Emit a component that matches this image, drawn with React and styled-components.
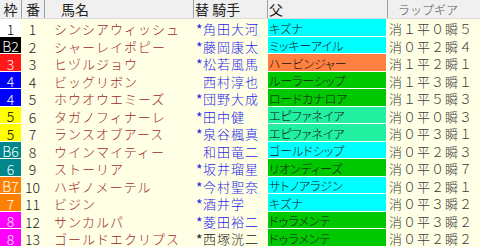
import React from 'react';
import styled, { createGlobalStyle } from 'styled-components';

const GlobalStyle = createGlobalStyle`
  html, body {
    margin: 0;
    padding: 0;
    background: #ffffe6;
  }
  body {
    font-family: "Noto Sans CJK JP", "Noto Sans", sans-serif;
    font-weight: 300;
  }
`;

const COLUMNS = '21px 23px 149px 74px 120px 93px';

const FRAME_COLORS = {
  1: { bg: '#ffffff', fg: '#000000' },
  2: { bg: '#000000', fg: '#ffffff' },
  3: { bg: '#ff1a1a', fg: '#ffffff' },
  4: { bg: '#0000ff', fg: '#ffffff' },
  5: { bg: '#ffff00', fg: '#000000' },
  6: { bg: '#00868b', fg: '#ffffff' },
  7: { bg: '#ff8000', fg: '#ffffff' },
  8: { bg: '#ff00ff', fg: '#ffffff' },
};

const SIRE_COLORS = {
  cyan: '#00ffff',
  orange: '#ff8040',
  green: '#00c800',
  mint: '#20f0a0',
};

const horses = [
  { frame: 1, label: '1', no: 1, name: 'シンシアウィッシュ', change: true, jockey: '角田大河', sire: 'キズナ', sireColor: 'cyan', gear: '消１平０瞬５' },
  { frame: 2, label: 'B2', no: 2, name: 'シャーレイポピー', change: true, jockey: '藤岡康太', sire: 'ミッキーアイル', sireColor: 'cyan', gear: '消０平２瞬４' },
  { frame: 3, label: '3', no: 3, name: 'ヒヅルジョウ', change: true, jockey: '松若風馬', sire: 'ハービンジャー', sireColor: 'orange', gear: '消１平２瞬１' },
  { frame: 4, label: '4', no: 4, name: 'ビッグリボン', change: false, jockey: '西村淳也', sire: 'ルーラーシップ', sireColor: 'green', gear: '消１平３瞬１' },
  { frame: 4, label: '4', no: 5, name: 'ホウオウエミーズ', change: true, jockey: '団野大成', sire: 'ロードカナロア', sireColor: 'green', gear: '消１平５瞬３' },
  { frame: 5, label: '5', no: 6, name: 'タガノフィナーレ', change: true, jockey: '田中健', sire: 'エピファネイア', sireColor: 'mint', gear: '消０平０瞬３' },
  { frame: 5, label: '5', no: 7, name: 'ランスオブアース', change: true, jockey: '泉谷楓真', sire: 'エピファネイア', sireColor: 'mint', gear: '消０平３瞬１' },
  { frame: 6, label: 'B6', no: 8, name: 'ウインマイティー', change: false, jockey: '和田竜二', sire: 'ゴールドシップ', sireColor: 'cyan', gear: '消０平２瞬３' },
  { frame: 6, label: '6', no: 9, name: 'ストーリア', change: true, jockey: '坂井瑠星', sire: 'リオンディーズ', sireColor: 'green', gear: '消０平０瞬７' },
  { frame: 7, label: 'B7', no: 10, name: 'ハギノメーテル', change: true, jockey: '今村聖奈', sire: 'サトノアラジン', sireColor: 'cyan', gear: '消０平２瞬１' },
  { frame: 7, label: '7', no: 11, name: 'ビジン', change: true, jockey: '酒井学', sire: 'キズナ', sireColor: 'cyan', gear: '消０平３瞬２' },
  { frame: 8, label: '8', no: 12, name: 'サンカルパ', change: true, jockey: '菱田裕二', sire: 'ドゥラメンテ', sireColor: 'green', gear: '消０平３瞬２' },
  { frame: 8, label: '8', no: 13, name: 'ゴールドエクリプス', change: true, jockey: '西塚洸二', sire: 'ドゥラメンテ', sireColor: 'green', gear: '消０平２瞬２', dark: true },
];

const Sheet = styled.div`
  width: 480px;
  height: 247px;
  overflow: hidden;
  background: #ffffe6;
`;

const HeaderRow = styled.div`
  display: grid;
  grid-template-columns: ${COLUMNS};
  grid-template-rows: 100%;
  height: 19px;
  background: #f0f0f0;
  border-bottom: 1px solid #dcdcdc;
  box-sizing: border-box;
`;

const HeaderCell = styled.div`
  display: flex;
  align-items: flex-end;
  justify-content: ${(p) => (p.$center ? 'center' : 'flex-start')};
  padding-left: ${(p) => p.$indent || 0}px;
  border-left: ${(p) => (p.$first ? 'none' : '1px solid #a0a0a0')};
  font-size: ${(p) => (p.$small ? 12 : 14)}px;
  font-weight: ${(p) => (p.$small ? 300 : 400)};
  line-height: 17px;
  color: ${(p) => (p.$small ? '#555' : '#222')};
  white-space: pre;
`;

const Row = styled.div`
  display: grid;
  grid-template-columns: ${COLUMNS};
  grid-template-rows: 100%;
  height: ${(p) => p.$height}px;
`;

const Cell = styled.div`
  display: flex;
  align-items: center;
  min-height: 0;
  padding-top: 2px;
  box-sizing: border-box;
  white-space: nowrap;
  line-height: 14px;
  font-size: 13px;
`;

const FrameCell = styled(Cell)`
  justify-content: center;
  font-size: 14px;
  background: ${(p) => p.$bg};
  color: ${(p) => p.$fg};
  border-bottom: 1px solid #ffffff;
`;

const NumberCell = styled(Cell)`
  justify-content: center;
  font-size: 14px;
  color: #222;
`;

const NameCell = styled(Cell)`
  padding-left: 10px;
  letter-spacing: 1px;
  color: #a02a2a;
`;

const JockeyCell = styled(Cell)`
  padding-left: 3px;
  letter-spacing: 1px;
  color: ${(p) => (p.$dark ? '#222' : '#1f1fe6')};
`;

const ChangeMark = styled.span`
  display: inline-block;
  width: 7px;
  letter-spacing: 0;
  font-size: 14px;
  font-weight: 400;
`;

const SireCell = styled(Cell)`
  padding-left: 1px;
  background: ${(p) => p.$bg};
  color: #111;
  font-size: 12px;
  font-feature-settings: "palt";
  border-bottom: 1px solid #ffffff;
  border-right: 1px solid #ffffff;
  border-left: 1px solid #ffffe6;
`;

const GearCell = styled(Cell)`
  padding-left: 2px;
  letter-spacing: 1px;
  color: #3a3a3a;
`;

function HorseRow({ horse, height }) {
  const frame = FRAME_COLORS[horse.frame];
  return (
    <Row $height={height}>
      <FrameCell $bg={frame.bg} $fg={frame.fg}>{horse.label}</FrameCell>
      <NumberCell>{horse.no}</NumberCell>
      <NameCell>{horse.name}</NameCell>
      <JockeyCell $dark={horse.dark}>
        <ChangeMark>{horse.change ? '*' : ''}</ChangeMark>
        {horse.jockey}
      </JockeyCell>
      <SireCell $bg={SIRE_COLORS[horse.sireColor]}>{horse.sire}</SireCell>
      <GearCell>{horse.gear}</GearCell>
    </Row>
  );
}

export default function App() {
  return (
    <>
      <GlobalStyle />
      <Sheet>
        <HeaderRow>
          <HeaderCell $first $center>枠</HeaderCell>
          <HeaderCell $center>番</HeaderCell>
          <HeaderCell $indent={16}>馬名</HeaderCell>
          <HeaderCell $indent={1}>{'替 騎手'}</HeaderCell>
          <HeaderCell $indent={1}>父</HeaderCell>
          <HeaderCell $indent={10} $small>ラップギア</HeaderCell>
        </HeaderRow>
        {horses.map((horse, i) => (
          <HorseRow key={horse.no} horse={horse} height={i % 2 === 0 ? 18 : 17} />
        ))}
      </Sheet>
    </>
  );
}
